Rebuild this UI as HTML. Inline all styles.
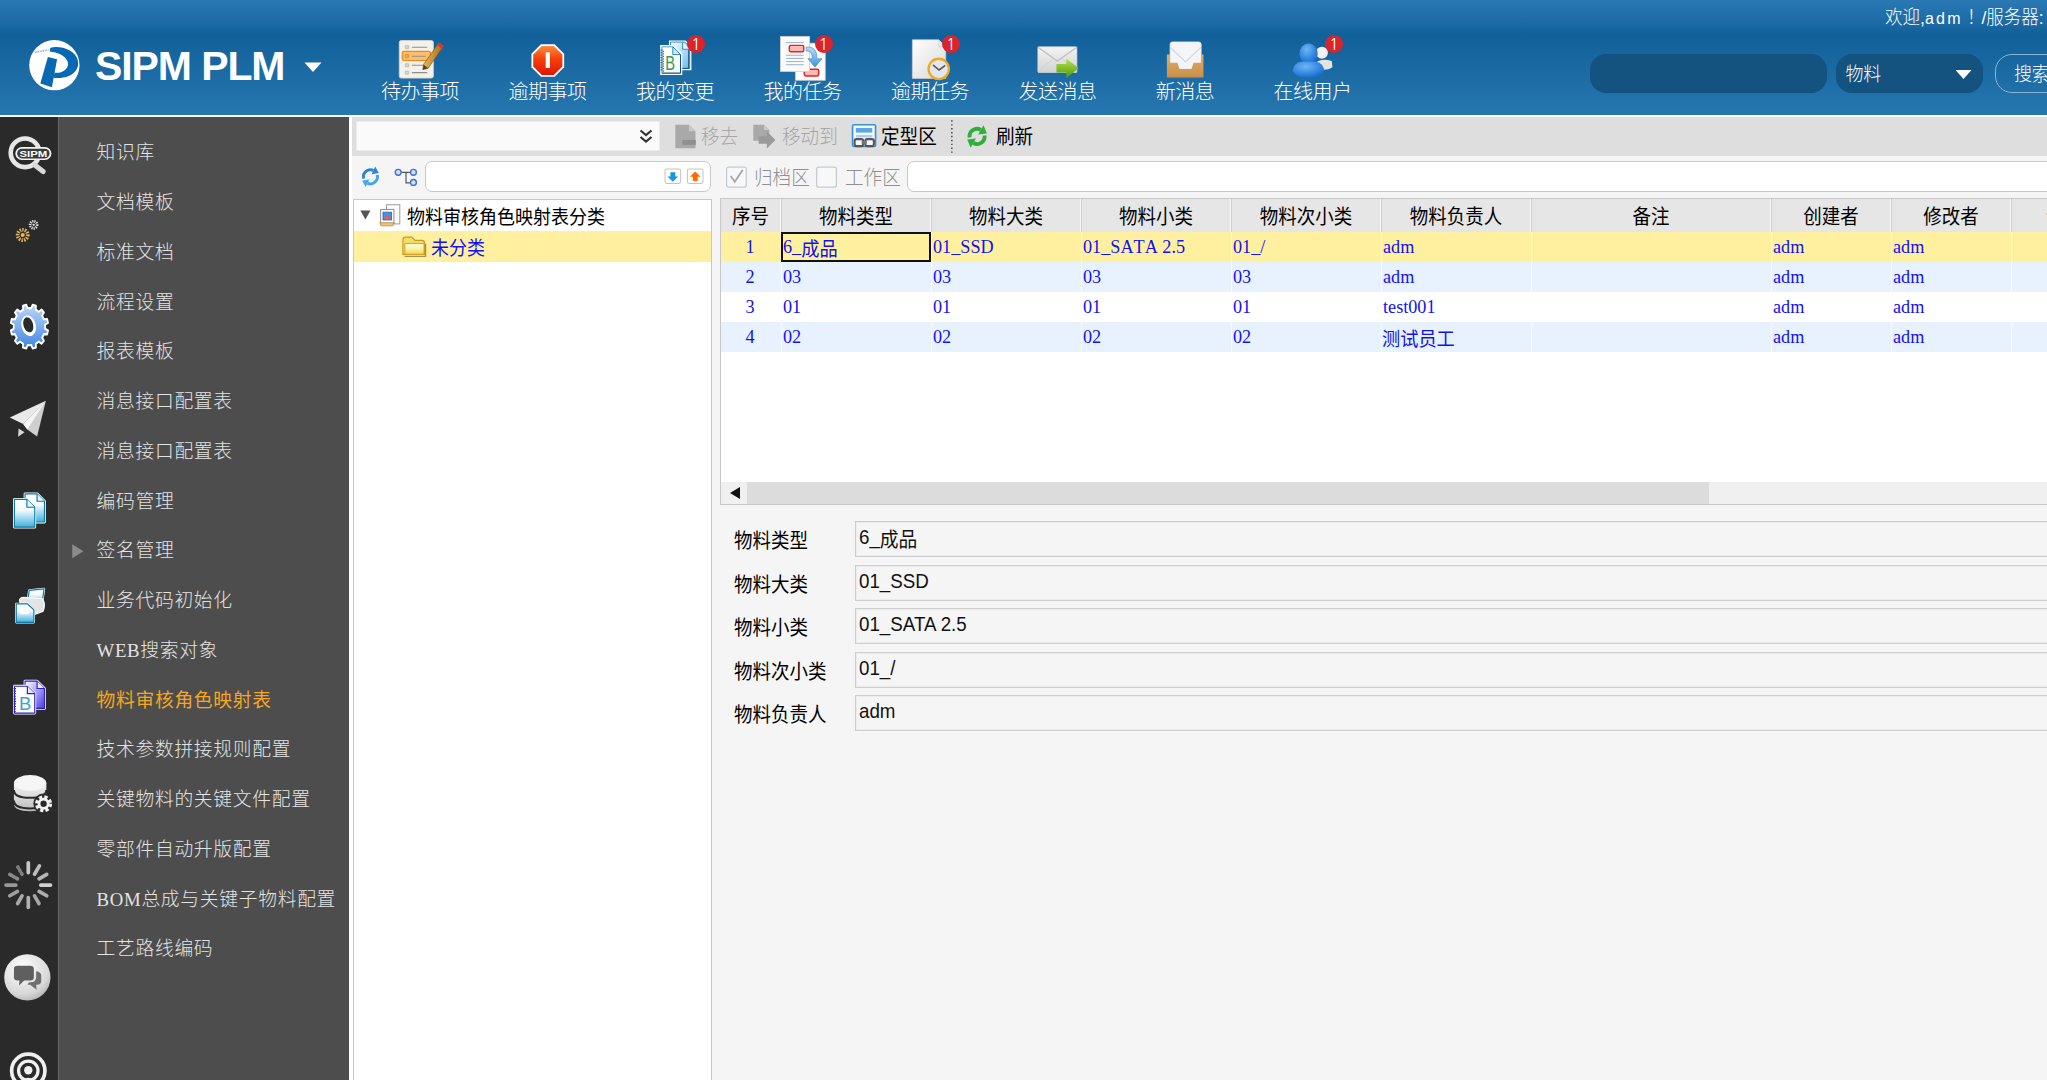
<!DOCTYPE html>
<html lang="zh-CN">
<head>
<meta charset="utf-8">
<title>SIPM PLM</title>
<style>
*{box-sizing:border-box;margin:0;padding:0}
html,body{width:2047px;height:1080px;overflow:hidden;background:#f5f5f5;font-family:"Liberation Sans","Noto Sans CJK SC",sans-serif;}
.abs{position:absolute}
#hdr{position:absolute;left:0;top:0;width:2047px;height:115px;background:linear-gradient(to bottom,#2a79b4 0px,#1d6aa5 22px,#11609a 35px,#13629c 42px,#2676b0 115px);}
#hline{position:absolute;left:0;top:115px;width:2047px;height:2.2px;background:#fff}
#logo-text{position:absolute;left:95px;top:44px;font:bold 41px/44px "Liberation Sans",sans-serif;color:#fff;letter-spacing:-1.1px;white-space:nowrap}
.nav{position:absolute;top:80px;width:128px;text-align:center;color:#fff;font:300 20px/24px "Liberation Sans","Noto Sans CJK SC",sans-serif;letter-spacing:-0.5px;white-space:nowrap}
.badge{position:absolute;width:18px;height:18px;border-radius:9px;background:#d9232d;color:#fff;font:15.5px/20px "NanumGothic","Liberation Sans",sans-serif;text-align:center}
#welcome{position:absolute;left:1885px;top:6px;transform:scaleY(1.08);transform-origin:50% 20%;color:#fff;font:300 17.5px/22px "Liberation Sans","Noto Sans CJK SC",sans-serif;white-space:nowrap}
.pill{position:absolute;top:53.5px;height:39.5px;border-radius:16px;background:#14527f}
/* sidebar */
#iconcol{position:absolute;left:0;top:117px;width:58px;height:963px;background:#2a2a2a}
#menucol{position:absolute;left:58px;top:117px;width:291px;height:963px;background:#4d4d4d;border-left:1px solid #686868}
.mi{position:absolute;left:96.5px;color:#e4e4e4;font:300 18.75px/24px "Liberation Serif","Noto Sans CJK SC",sans-serif;letter-spacing:.72px;white-space:nowrap}
.mi.on{color:#f5a623;font-weight:400}
/* main */
#tb1{position:absolute;left:352px;top:117px;width:1695px;height:39px;background:#dedede}
#tb2{position:absolute;left:352px;top:156px;width:1695px;height:43px;background:#f5f5f5}
.tbt{position:absolute;top:125px;font:400 18.6px/24px "Liberation Sans","Noto Sans CJK SC",sans-serif;white-space:nowrap;color:#000;transform:scaleY(1.1);transform-origin:50% 50%}
.tbt.dis{color:#a6a6a6;font-weight:300}
#tree{position:absolute;left:353px;top:199px;width:359px;height:890px;background:#fff;border:1px solid #c8c8c8}
#grid{position:absolute;left:720px;top:198px;width:1340px;height:307px;background:#fff;border:1px solid #c8c8c8}
.th{position:absolute;top:0;height:33px;background:#e6e6e6;border-right:1px solid #f8f8f8;border-left:1px solid #d0d0d0;text-align:center;font:400 18.5px/38px "Liberation Sans","Noto Sans CJK SC",sans-serif;color:#000;white-space:nowrap;overflow:hidden}
.row{position:absolute;left:0;width:1340px;height:30px}
.c{position:absolute;top:0;height:30px;padding-left:1px;font:18.2px/30px "Liberation Serif","Noto Sans CJK SC",serif;font-kerning:none;color:#1212ee;white-space:nowrap;border-left:1px solid rgba(255,255,255,.75)}
.lbl{position:absolute;left:734px;font:400 18.5px/24px "Liberation Sans","Noto Sans CJK SC",sans-serif;color:#000;white-space:nowrap;transform:scaleY(1.08);transform-origin:50% 50%}
.inp{position:absolute;left:855px;width:1300px;height:36px;border:1px solid #cdcdcd;box-shadow:inset 0 0 0 1px #ececec;background:#f5f5f5;font:18.75px/31px "Liberation Sans","Noto Sans CJK SC",sans-serif;padding-left:3px;color:#111;white-space:nowrap}
.sy{display:inline-block;transform:scaleY(1.08);transform-origin:50% 55%}
</style>
</head>
<body>
<div id="hdr"></div>
<div id="hline"></div>
<svg class="abs" style="left:20px;top:30px" width="80" height="70" viewBox="0 0 1234 1080">
<circle cx="530" cy="543" r="388" fill="#fff"/>
<path d="M430 418 L572 450 L492 882 L314 826 Z" fill="#0768b3"/>
<path d="M468 272 C620 235 850 300 893 470 C925 620 790 765 518 736 L532 660 C680 672 765 575 735 488 C700 390 580 342 458 330 Z" fill="#0768b3"/>
<path d="M228 345 L440 305" stroke="#0768b3" stroke-width="26" stroke-dasharray="14 12" opacity=".55"/>
</svg>
<div id="logo-text">SIPM PLM</div>
<svg class="abs" style="left:304px;top:62px" width="18" height="11" viewBox="0 0 18 11"><path d="M0.5 0.5 L17.5 0.5 L9 10 Z" fill="#fff"/></svg>

<svg class="abs" style="left:370px;top:25px" width="360" height="90" viewBox="0 0 2047 512">
<defs>
<linearGradient id="gStop" x1="0" y1="0" x2="0" y2="1"><stop offset="0" stop-color="#ff8a3c"/><stop offset=".45" stop-color="#f5400a"/><stop offset="1" stop-color="#e01500"/></linearGradient>
<linearGradient id="gPage" x1="0" y1="0" x2="1" y2="1"><stop offset="0" stop-color="#ffffff"/><stop offset="1" stop-color="#6fb6e6"/></linearGradient>
<linearGradient id="gPen" x1="0" y1="0" x2="1" y2="0"><stop offset="0" stop-color="#e8b85a"/><stop offset="1" stop-color="#a9681a"/></linearGradient>
</defs>
<!-- todo list -->
<rect x="166" y="88" width="194" height="214" rx="12" fill="#f4f1ea" stroke="#d9d3c6" stroke-width="5"/>
<rect x="183" y="150" width="160" height="52" rx="10" fill="#fbbf6c" stroke="#f0871a" stroke-width="7"/>
<g fill="#d8d5cf" stroke="#a9a59c" stroke-width="3"><rect x="200" y="117" width="20" height="18" rx="3"/><rect x="200" y="168" width="20" height="18" rx="3" fill="#f7a94a" stroke="#c97a1b"/><rect x="200" y="220" width="20" height="18" rx="3"/><rect x="200" y="262" width="20" height="18" rx="3"/></g>
<g stroke="#8e8e8e" stroke-width="6"><path d="M238 127H325M238 178H318M238 229H300M238 271H325"/></g>
<path d="M392 100 L418 120 L330 246 L300 254 L304 224 Z" fill="url(#gPen)" stroke="#8a5a18" stroke-width="4"/>
<path d="M392 100 L418 120 L408 134 L382 114 Z" fill="#e2332b"/>
<path d="M304 224 L330 246 L300 254 Z" fill="#5a4026"/>
<!-- stop sign -->
<g transform="translate(0 5)">
<path d="M972 104 L1050 104 L1104 158 L1104 236 L1050 290 L972 290 L918 236 L918 158 Z" fill="#fff"/>
<path d="M977 114 L1045 114 L1094 163 L1094 231 L1045 280 L977 280 L928 231 L928 163 Z" fill="url(#gStop)"/>
<rect x="999" y="150" width="24" height="90" rx="3" fill="#fff"/>
</g>
<!-- B docs -->
<path d="M1700 88 L1795 88 L1828 121 L1828 257 L1700 257 Z" fill="#fff"/>
<path d="M1709 97 L1790 97 L1818 125 L1818 247 L1709 247 Z" fill="url(#gPage)" stroke="#1583c4" stroke-width="5"/>
<path d="M1778 99 L1778 138 L1817 138" fill="#e8f5fc" stroke="#1583c4" stroke-width="5"/>
<path d="M1812 140 V247 H1712" fill="none" stroke="#0b4f94" stroke-width="5"/>
<path d="M1650 114 L1728 114 L1776 162 L1776 285 L1650 285 Z" fill="#fff"/>
<path d="M1660 124 L1722 124 L1766 168 L1766 274 L1660 274 Z" fill="#fff" stroke="#2a97d0" stroke-width="5"/>
<path d="M1722 124 L1722 168 L1766 168 Z" fill="#cfe9f8" stroke="#1583c4" stroke-width="5"/>
<path d="M1660 274 H1766 V170" fill="none" stroke="#0b3f80" stroke-width="5"/>
<path d="M1658 140 V262" stroke="#2a6fae" stroke-width="12" stroke-dasharray="7 7"/>
<path d="M1668 147 V268" stroke="#2a6fae" stroke-width="8" stroke-dasharray="7 7"/>
<text transform="translate(1679 257) scale(.72 1)" font-family="Liberation Sans, sans-serif" font-size="116" fill="#2e9f4f">B</text>
</svg>
<svg class="abs" style="left:740px;top:25px" width="360" height="90" viewBox="0 0 2047 512">
<defs>
<linearGradient id="gDoc" x1="0" y1="0" x2="1" y2="1"><stop offset="0" stop-color="#ffffff"/><stop offset="1" stop-color="#d8d8d8"/></linearGradient>
<linearGradient id="gArr" x1="0" y1="0" x2="0" y2="1"><stop offset="0" stop-color="#b9dcf7"/><stop offset="1" stop-color="#3e93d8"/></linearGradient>
<linearGradient id="gGreen" x1="0" y1="0" x2="0" y2="1"><stop offset="0" stop-color="#b6e34a"/><stop offset="1" stop-color="#4c9a10"/></linearGradient>
<linearGradient id="gEnv" x1="0" y1="0" x2="0" y2="1"><stop offset="0" stop-color="#f4f4f4"/><stop offset="1" stop-color="#d2d2d2"/></linearGradient>
</defs>
<!-- my tasks -->
<rect x="316" y="104" width="168" height="210" fill="#fff" stroke="#d6d6d6" stroke-width="5"/>
<rect x="365" y="252" width="82" height="38" rx="8" fill="#f9b9b5" stroke="#e8231f" stroke-width="8"/>
<rect x="230" y="66" width="165" height="198" fill="#fbfbfb" stroke="#d2d2d2" stroke-width="5"/>
<g stroke="#86a9cf" stroke-width="5"><path d="M262 100H362M262 172H362M262 190H362M262 208H362M262 226H362"/></g>
<rect x="280" y="116" width="82" height="36" rx="8" fill="#f9b9b5" stroke="#e8231f" stroke-width="8"/>
<path d="M376 126 C420 120 440 150 436 192 L466 192 L426 240 L386 192 L410 192 C412 160 400 148 376 148 Z" fill="url(#gArr)" stroke="#4d96d4" stroke-width="4"/>
<!-- overdue tasks -->
<path d="M980 84 L1130 84 L1170 124 L1170 304 L980 304 Z" fill="url(#gDoc)" stroke="#cfcfcf" stroke-width="4"/>
<path d="M1130 84 L1130 124 L1170 124 Z" fill="#e9e9e9" stroke="#c8c8c8" stroke-width="3"/>
<circle cx="1130" cy="250" r="58" fill="#e3e6f1" stroke="#f0a81c" stroke-width="13"/>
<path d="M1100 230 L1132 256 L1164 232" fill="none" stroke="#555" stroke-width="9" stroke-linecap="round"/>
<!-- send message -->
<rect x="1694" y="124" width="222" height="146" rx="5" fill="url(#gEnv)" stroke="#d9d9d9" stroke-width="4"/>
<path d="M1696 128 L1805 205 L1914 128" fill="none" stroke="#bdbdbd" stroke-width="6"/>
<path d="M1696 268 L1775 195 M1914 268 L1835 195" stroke="#cfcfcf" stroke-width="5"/>
<path d="M1800 222 L1856 222 L1856 190 L1926 246 L1856 302 L1856 270 L1800 270 Z" fill="url(#gGreen)"/>
</svg>
<svg class="abs" style="left:1100px;top:25px" width="360" height="90" viewBox="0 0 2047 512">
<defs>
<linearGradient id="gTray" x1="0" y1="0" x2="0" y2="1"><stop offset="0" stop-color="#e0ae68"/><stop offset="1" stop-color="#c98f48"/></linearGradient>
<radialGradient id="gBlue" cx=".4" cy=".3" r=".8"><stop offset="0" stop-color="#6db6f5"/><stop offset="1" stop-color="#0a63cf"/></radialGradient>
</defs>
<!-- inbox -->
<path d="M398 110 Q398 96 412 96 L560 96 Q575 96 575 110 L575 250 L398 250 Z" fill="#f3f5f8" stroke="#e2e5ea" stroke-width="4"/>
<path d="M400 128 L486 210 L573 128" fill="none" stroke="#d3d7dd" stroke-width="6"/>
<path d="M380 168 L398 168 L398 215 L440 215 L452 250 L520 250 L532 215 L575 215 L575 168 L588 168 L588 298 L380 298 Z" fill="url(#gTray)"/>
<!-- users -->
<circle cx="1262" cy="158" r="34" fill="#f2f2f2"/>
<path d="M1225 215 Q1262 185 1318 205 L1322 240 Q1290 262 1240 250 Z" fill="#e4e4e4"/>
<ellipse cx="1186" cy="163" rx="52" ry="58" fill="url(#gBlue)"/>
<path d="M1096 262 Q1100 215 1150 208 L1222 208 Q1272 215 1276 262 Q1260 300 1186 300 Q1112 300 1096 262 Z" fill="url(#gBlue)"/>
</svg>
<div class="nav" style="left:356px">待办事项</div>
<div class="nav" style="left:483.5px">逾期事项</div>
<div class="nav" style="left:611px">我的变更</div>
<div class="nav" style="left:738.5px">我的任务</div>
<div class="nav" style="left:866px">逾期任务</div>
<div class="nav" style="left:993.5px">发送消息</div>
<div class="nav" style="left:1121px">新消息</div>
<div class="nav" style="left:1248.5px">在线用户</div>
<div class="badge" style="left:687px;top:35px">1</div>
<div class="badge" style="left:814.5px;top:35px">1</div>
<div class="badge" style="left:942px;top:35px">1</div>
<div class="badge" style="left:1325px;top:35px">1</div>

<div id="welcome">欢迎,<span style="letter-spacing:2.3px;font-size:16px">adm</span><span style="margin-left:4px;margin-right:-3px">！</span>/服务器:</div>
<div class="pill" style="left:1590px;width:237px"></div>
<div class="pill" style="left:1836px;width:147px"></div>
<div class="abs" style="left:1845.5px;top:62px;color:#fff;font:300 18px/24px 'Liberation Sans','Noto Sans CJK SC',sans-serif;letter-spacing:-.3px;transform:scaleY(1.1)">物料</div>
<svg class="abs" style="left:1955px;top:70px" width="17" height="9" viewBox="0 0 17 9"><path d="M0.5 0 L16.5 0 L8.5 9 Z" fill="#fff"/></svg>
<div class="abs" style="left:1995px;top:54px;width:120px;height:39px;border:1.5px solid #8db4d6;border-radius:17px"></div>
<div class="abs" style="left:2014px;top:62px;color:#fff;font:300 18px/24px 'Liberation Sans','Noto Sans CJK SC',sans-serif;letter-spacing:-.3px;white-space:nowrap;transform:scaleY(1.1)">搜索</div>

<div id="iconcol"></div>
<div id="menucol"></div>
<svg class="abs" style="left:0;top:110px" width="120" height="250" viewBox="0 0 518 1080">
<defs>
<linearGradient id="gGear" x1="0" y1="0" x2="0" y2="1"><stop offset="0" stop-color="#b9d4f6"/><stop offset=".5" stop-color="#7fb0ee"/><stop offset="1" stop-color="#3f83e0"/></linearGradient>
</defs>
<!-- search sipm -->
<circle cx="108" cy="185" r="62" fill="none" stroke="#e6e6e6" stroke-width="20"/>
<path d="M150 238 L186 266" stroke="#d9d9d9" stroke-width="22" stroke-linecap="round"/>
<rect x="66" y="160" width="156" height="56" rx="28" fill="#f2f2f2"/>
<rect x="74" y="167" width="140" height="42" rx="21" fill="#3a3a3a"/>
<text x="144" y="203" text-anchor="middle" font-family="Liberation Sans, sans-serif" font-weight="bold" font-size="40" fill="#fff" textLength="120" lengthAdjust="spacingAndGlyphs">SIPM</text>
<!-- small gears -->
<circle cx="98" cy="540" r="22" fill="none" stroke="#e5b85a" stroke-width="16" stroke-dasharray="6 5"/>
<circle cx="98" cy="540" r="9" fill="#e5b85a"/>
<circle cx="145" cy="496" r="15" fill="none" stroke="#e8e8e8" stroke-width="12" stroke-dasharray="5 4"/>
<circle cx="145" cy="496" r="5" fill="#e8e8e8"/>
<!-- big gear -->
<g transform="translate(127 936) scale(.85 1)">
<path d="M80.0 0.0 L79.5 8.9 L94.6 16.3 L90.1 33.2 L73.3 32.1 L69.3 40.0 L64.4 47.4 L73.8 61.4 L61.4 73.8 L47.4 64.4 L40.0 69.3 L32.1 73.3 L33.2 90.1 L16.3 94.6 L8.9 79.5 L0.0 80.0 L-8.9 79.5 L-16.3 94.6 L-33.2 90.1 L-32.1 73.3 L-40.0 69.3 L-47.4 64.4 L-61.4 73.8 L-73.8 61.4 L-64.4 47.4 L-69.3 40.0 L-73.3 32.1 L-90.1 33.2 L-94.6 16.3 L-79.5 8.9 L-80.0 0.0 L-79.5 -8.9 L-94.6 -16.3 L-90.1 -33.2 L-73.3 -32.1 L-69.3 -40.0 L-64.4 -47.4 L-73.8 -61.4 L-61.4 -73.8 L-47.4 -64.4 L-40.0 -69.3 L-32.1 -73.3 L-33.2 -90.1 L-16.3 -94.6 L-8.9 -79.5 L-0.0 -80.0 L8.9 -79.5 L16.3 -94.6 L33.2 -90.1 L32.1 -73.3 L40.0 -69.3 L47.4 -64.4 L61.4 -73.8 L73.8 -61.4 L64.4 -47.4 L69.3 -40.0 L73.3 -32.1 L90.1 -33.2 L94.6 -16.3 L79.5 -8.9 Z" fill="url(#gGear)" stroke="#fff" stroke-width="9" stroke-linejoin="round"/>
<ellipse rx="36" ry="46" transform="translate(-4 -4) rotate(-25)" fill="#fff"/>
<ellipse rx="24" ry="34" transform="translate(-6 -8) rotate(-25)" fill="#2a2a2a"/>
</g>
</svg>
<svg class="abs" style="left:0;top:360px" width="120" height="250" viewBox="0 0 518 1080">
<defs>
<linearGradient id="gPg2" x1="0" y1="0" x2="0" y2="1"><stop offset="0" stop-color="#ffffff"/><stop offset=".4" stop-color="#f2fafe"/><stop offset="1" stop-color="#3fb0dc"/></linearGradient>
</defs>
<!-- paper plane -->
<path d="M198 176 L42 248 L100 276 Z" fill="#e9e9e9"/>
<path d="M198 176 L100 276 L118 300 L160 330 Z" fill="#cfcfcf"/>
<path d="M198 176 L118 300 L100 276 Z" fill="#f4f4f4"/>
<path d="M80 296 L106 312 L78 332 Z" fill="#d6d6d6"/>
<!-- docs -->
<path d="M108 578 L160 578 L192 610 L192 700 L108 700 Z" fill="url(#gPg2)" stroke="#fff" stroke-width="12" stroke-linejoin="round"/>
<path d="M108 578 L160 578 L192 610 L192 700 L108 700 Z" fill="url(#gPg2)" stroke="#0b7aa8" stroke-width="5"/>
<path d="M160 578 L160 610 L192 610" fill="#e4f3fc" stroke="#0b7aa8" stroke-width="5"/>
<path d="M62 602 L116 602 L150 636 L150 722 L62 722 Z" fill="url(#gPg2)" stroke="#fff" stroke-width="12" stroke-linejoin="round"/>
<path d="M62 602 L116 602 L150 636 L150 722 L62 722 Z" fill="url(#gPg2)" stroke="#0b7aa8" stroke-width="5"/>
<path d="M116 602 L116 636 L150 636" fill="#e4f3fc" stroke="#0b7aa8" stroke-width="5"/>
<!-- expand triangle -->
<path d="M312 796 L360 826 L312 856 Z" fill="#8c8c8c"/>
</svg>
<svg class="abs" style="left:0;top:570px" width="120" height="250" viewBox="0 0 518 1080">
<defs>
<linearGradient id="gPg3" x1="0" y1="0" x2="0" y2="1"><stop offset="0" stop-color="#ffffff"/><stop offset=".4" stop-color="#f2fafe"/><stop offset="1" stop-color="#3fb0dc"/></linearGradient>
<linearGradient id="gPg4" x1="0" y1="0" x2="1" y2="1"><stop offset="0" stop-color="#ffffff"/><stop offset="1" stop-color="#4a3ee0"/></linearGradient>
<linearGradient id="gDb" x1="0" y1="0" x2="0" y2="1"><stop offset="0" stop-color="#f4f4f4"/><stop offset="1" stop-color="#bdbdbd"/></linearGradient>
</defs>
<!-- copy docs -->
<path d="M126 88 L190 82 L182 140 L118 146 Z" fill="url(#gPg3)" stroke="#fff" stroke-width="10" stroke-linejoin="round"/>
<path d="M126 88 L190 82 L182 140 L118 146 Z" fill="url(#gPg3)" stroke="#0b7aa8" stroke-width="5"/>
<path d="M84 132 Q84 118 104 118 L184 124 Q198 150 186 178 L150 192 L100 186 Z" fill="#e4e4e4" stroke="#fff" stroke-width="5"/>
<path d="M70 146 L118 146 L146 172 L146 226 L70 226 Z" fill="url(#gPg3)" stroke="#fff" stroke-width="10" stroke-linejoin="round"/>
<path d="M70 146 L118 146 L146 172 L146 226 L70 226 Z" fill="url(#gPg3)" stroke="#0b7aa8" stroke-width="5"/>
<path d="M92 160 L92 186 L124 186" fill="none" stroke="#fff" stroke-width="10"/>
<!-- B docs -->
<path d="M108 480 L160 480 L192 512 L192 598 L108 598 Z" fill="url(#gPg4)" stroke="#fff" stroke-width="12" stroke-linejoin="round"/>
<path d="M108 480 L160 480 L192 512 L192 598 L108 598 Z" fill="url(#gPg4)" stroke="#2b1fc8" stroke-width="5"/>
<path d="M160 480 L160 512 L192 512" fill="#e9e6ff" stroke="#2b1fc8" stroke-width="5"/>
<path d="M62 502 L118 502 L150 534 L150 618 L62 618 Z" fill="#fff" stroke="#fff" stroke-width="12" stroke-linejoin="round"/>
<path d="M62 502 L118 502 L150 534 L150 618 L62 618 Z" fill="#fff" stroke="#2b1fc8" stroke-width="5"/>
<path d="M118 502 L118 534 L150 534" fill="#e9e6ff" stroke="#2b1fc8" stroke-width="5"/>
<path d="M64 510 V612" stroke="#2b1fc8" stroke-width="10" stroke-dasharray="5 6"/>
<text x="82" y="606" font-family="Liberation Sans, sans-serif" font-size="80" fill="#3aa6cc">B</text>
<!-- database gear -->
<g fill="url(#gDb)">
<path d="M60 920 L60 1010 Q60 1042 130 1042 Q200 1042 200 1010 L200 920 Z"/>
<ellipse cx="130" cy="920" rx="70" ry="34" fill="#f6f6f6"/>
</g>
<path d="M60 950 Q60 984 130 984 Q200 984 200 950" fill="none" stroke="#2a2a2a" stroke-width="9"/>
<path d="M60 996 Q60 1030 130 1030 Q200 1030 200 996" fill="none" stroke="#2a2a2a" stroke-width="9"/>
<circle cx="188" cy="1010" r="44" fill="#2a2a2a"/>
<circle cx="188" cy="1010" r="26" fill="none" stroke="#f2f2f2" stroke-width="22" stroke-dasharray="12 8.4"/>
<circle cx="188" cy="1010" r="20" fill="none" stroke="#f2f2f2" stroke-width="12"/>
</svg>
<svg class="abs" style="left:0;top:830px" width="120" height="250" viewBox="0 0 518 1080">
<defs>
<radialGradient id="gBall" cx=".4" cy=".3" r=".8"><stop offset="0" stop-color="#ffffff"/><stop offset=".7" stop-color="#d8d8d8"/><stop offset="1" stop-color="#a8a8a8"/></radialGradient>
</defs>
<!-- spinner -->
<g transform="translate(122 238)" stroke-linecap="round" stroke-width="16">
<path d="M0 -54 V-96" stroke="#c8c8c8"/>
<path d="M0 -54 V-96" stroke="#bdbdbd" transform="rotate(30)"/>
<path d="M0 -54 V-92" stroke="#b5b5b5" transform="rotate(60)"/>
<path d="M0 -54 V-96" stroke="#d0d0d0" transform="rotate(90)"/>
<path d="M0 -54 V-92" stroke="#adadad" transform="rotate(120)"/>
<path d="M0 -54 V-92" stroke="#a5a5a5" transform="rotate(150)"/>
<path d="M0 -54 V-96" stroke="#b0b0b0" transform="rotate(180)"/>
<path d="M0 -54 V-92" stroke="#a8a8a8" transform="rotate(210)"/>
<path d="M0 -54 V-92" stroke="#a0a0a0" transform="rotate(240)"/>
<path d="M0 -54 V-96" stroke="#989898" transform="rotate(270)"/>
<path d="M0 -54 V-92" stroke="#8a8a8a" stroke-dasharray="6 10" transform="rotate(300)"/>
<path d="M0 -54 V-92" stroke="#7d7d7d" stroke-dasharray="4 12" transform="rotate(330)"/>
</g>
<!-- chat -->
<circle cx="118" cy="637" r="100" fill="url(#gBall)"/>
<path d="M60 600 Q60 586 76 586 L130 586 Q146 586 146 600 L146 636 Q146 650 130 650 L104 650 L82 672 L84 650 L76 650 Q60 650 60 636 Z" fill="#5f5f5f"/>
<path d="M156 610 Q178 612 178 630 L178 652 Q178 668 160 668 L156 668 L158 690 L130 668 L118 668 L126 658 L132 658 Q156 658 156 636 Z" fill="#707070"/>
<!-- target person -->
<circle cx="122" cy="1040" r="72" fill="none" stroke="#f0f0f0" stroke-width="16"/>
<circle cx="122" cy="1040" r="42" fill="none" stroke="#f0f0f0" stroke-width="14"/>
<circle cx="122" cy="1038" r="18" fill="#f0f0f0"/>
<path d="M88 1090 Q122 1050 156 1090 Z" fill="#f0f0f0"/>
</svg>
<div class="mi" style="top:141.3px">知识库</div>
<div class="mi" style="top:191.1px">文档模板</div>
<div class="mi" style="top:240.8px">标准文档</div>
<div class="mi" style="top:290.6px">流程设置</div>
<div class="mi" style="top:340.3px">报表模板</div>
<div class="mi" style="top:390.1px">消息接口配置表</div>
<div class="mi" style="top:439.8px">消息接口配置表</div>
<div class="mi" style="top:489.6px">编码管理</div>
<div class="mi" style="top:539.3px">签名管理</div>
<div class="mi" style="top:589.0px">业务代码初始化</div>
<div class="mi" style="top:638.8px">WEB搜索对象</div>
<div class="mi on" style="top:688.5px">物料审核角色映射表</div>
<div class="mi" style="top:738.3px">技术参数拼接规则配置</div>
<div class="mi" style="top:788.0px">关键物料的关键文件配置</div>
<div class="mi" style="top:837.8px">零部件自动升版配置</div>
<div class="mi" style="top:887.5px">BOM总成与关键子物料配置</div>
<div class="mi" style="top:937.3px">工艺路线编码</div>

<div class="abs" style="left:349px;top:117px;width:3.5px;height:963px;background:#fff"></div>
<div id="tb1"></div>
<div id="tb2"></div>
<!-- combobox -->
<div class="abs" style="left:356px;top:121px;width:304px;height:30px;background:#fafafa;border:1px solid #ececec"></div>
<svg class="abs" style="left:638px;top:128px" width="16" height="17" viewBox="0 0 16 17"><path d="M2.5 2.5 L8 7 L13.500 2.5 M2.500 9 L8 13.500 L13.500 9" fill="none" stroke="#333" stroke-width="2.200"/></svg>
<div class="abs" style="left:425px;top:161px;width:286px;height:31px;background:#fff;border:1px solid #c9c9c9;border-radius:7px"></div>
<div class="abs" style="left:907px;top:161px;width:1200px;height:31px;background:#fff;border:1px solid #c9c9c9;border-radius:7px"></div>
<!-- toolbar buttons -->
<svg class="abs" style="left:640px;top:110px" width="420" height="160" viewBox="0 0 2047 780">
<!-- remove icon -->
<path d="M172 72 L238 72 L270 104 L270 186 L172 186 Z" fill="#a9a9a9"/>
<path d="M238 72 L238 104 L270 104 Z" fill="#c9c9c9"/>
<rect x="206" y="146" width="66" height="24" fill="#8f8f8f"/>
<!-- move icon -->
<path d="M552 72 L604 72 L630 98 L630 150 L552 150 Z" fill="#a9a9a9"/>
<path d="M604 72 L604 98 L630 98 Z" fill="#c9c9c9"/>
<path d="M578 128 L618 128 L618 104 L660 146 L618 188 L618 164 L578 164 Z" fill="#9a9a9a"/>
<!-- dingxing icon -->
<rect x="1036" y="72" width="112" height="106" rx="6" fill="#f4f9ff" stroke="#3f8fd6" stroke-width="8"/>
<rect x="1052" y="88" width="80" height="22" fill="#5aa5e8"/>
<rect x="1052" y="122" width="80" height="12" fill="#a8d0f4"/>
<rect x="1046" y="142" width="42" height="34" rx="10" fill="none" stroke="#555" stroke-width="10"/>
<rect x="1098" y="142" width="42" height="34" rx="10" fill="none" stroke="#555" stroke-width="10"/>
<rect x="1080" y="152" width="26" height="12" fill="#777"/>
<!-- separator -->
<path d="M1520 50 V212" stroke="#444" stroke-width="7" stroke-dasharray="7 12"/>
<!-- refresh -->
<path d="M1606.4 134.1 A37 37 0 0 1 1661.5 97.0" fill="none" stroke="#2fae3c" stroke-width="19"/><path d="M1674.5 74.4 L1648.5 119.5 L1690.9 114.0 Z" fill="#2fae3c"/>
<path d="M1679.6 123.9 A37 37 0 0 1 1624.5 161.0" fill="none" stroke="#2fae3c" stroke-width="19"/><path d="M1611.5 183.6 L1637.5 138.5 L1595.1 144.0 Z" fill="#2fae3c"/>
<!-- down/up buttons -->
<rect x="122" y="288" width="76" height="70" rx="8" fill="#fff" stroke="#c4c4c4" stroke-width="5"/>
<path d="M148 304 L172 304 L172 324 L186 324 L160 350 L134 324 L148 324 Z" fill="#1b96d8"/>
<rect x="231" y="288" width="76" height="70" rx="8" fill="#fff" stroke="#c4c4c4" stroke-width="5"/>
<path d="M257 346 L281 346 L281 326 L295 326 L269 300 L243 326 L257 326 Z" fill="#ff6a00"/>
<!-- checkboxes -->
<rect x="422" y="278" width="96" height="98" rx="10" fill="#f8f8f8" stroke="#c3c9d4" stroke-width="6"/>
<path d="M442 322 L462 350 L500 292" fill="none" stroke="#a9a9a9" stroke-width="9"/>
<rect x="861" y="278" width="96" height="98" rx="10" fill="#f8f8f8" stroke="#c3c9d4" stroke-width="6"/>
</svg>
<div class="tbt dis" style="left:701px">移去</div>
<div class="tbt dis" style="left:782px">移动到</div>
<div class="tbt" style="left:881px">定型区</div>
<div class="tbt" style="left:996px">刷新</div>
<div class="tbt" style="left:754px;top:166px;color:#8f8f8f;font-weight:300">归档区</div>
<div class="tbt" style="left:845px;top:166px;color:#8f8f8f;font-weight:300">工作区</div>
<!-- left search row -->
<svg class="abs" style="left:340px;top:100px" width="100" height="170" viewBox="0 0 512 870">
<path d="M121.2 402.3 A36 36 0 0 1 171.2 360.4" fill="none" stroke="#2b84dc" stroke-width="15"/><path d="M180.5 340.4 L161.9 380.3 L198.4 373.1 Z" fill="#2b84dc"/>
<path d="M190.8 383.7 A36 36 0 0 1 140.8 425.6" fill="none" stroke="#45a6ee" stroke-width="15"/><path d="M131.5 445.6 L150.1 405.7 L113.6 412.9 Z" fill="#45a6ee"/>
<circle cx="298" cy="370" r="15" fill="#cfe0f8" stroke="#3f6fd0" stroke-width="7"/>
<circle cx="376" cy="370" r="15" fill="#cfe0f8" stroke="#3f6fd0" stroke-width="7"/>
<circle cx="376" cy="422" r="15" fill="#cfe0f8" stroke="#3f6fd0" stroke-width="7"/>
<path d="M316 370 H358 M338 372 V424 H358" fill="none" stroke="#555" stroke-width="6"/>
</svg>
<!-- tree -->
<div id="tree">
<div class="abs" style="left:0;top:31px;width:357px;height:31px;background:#fff0a0"></div>
</div>
<svg class="abs" style="left:340px;top:100px" width="400" height="170" viewBox="0 0 2047 870">
<path d="M104 566 L156 566 L130 612 Z" fill="#555"/>
<rect x="238" y="536" width="68" height="98" fill="#fff" stroke="#9a9a9a" stroke-width="5"/>
<rect x="208" y="560" width="68" height="72" fill="#fff" stroke="#8a8a8a" stroke-width="5"/>
<rect x="220" y="574" width="44" height="40" fill="#4a90e2" stroke="#2d5fa8" stroke-width="4"/>
<rect x="232" y="590" width="22" height="22" fill="#e85a4a"/>
<path d="M204 628 L276 628 L270 644 L210 644 Z" fill="#f1c27a" stroke="#b98331" stroke-width="4"/>
<!-- folder -->
<defs><linearGradient id="gFold" x1="0" y1="0" x2="0" y2="1"><stop offset="0" stop-color="#fffde0"/><stop offset=".5" stop-color="#fdf3a0"/><stop offset="1" stop-color="#f3cf55"/></linearGradient></defs>
<path d="M330 800 L438 800 L438 736" fill="none" stroke="#7d6a2c" stroke-width="7" opacity=".7"/>
<path d="M322 716 Q322 702 336 702 L368 702 L384 718 L420 718 Q432 718 432 730 L432 790 L322 790 Z" fill="#f6dc6a" stroke="#c9981c" stroke-width="6"/>
<path d="M332 734 L430 734 L430 790 L332 790 Z" fill="url(#gFold)" stroke="#d0a224" stroke-width="5"/>
</svg>
<div class="tbt" style="left:407px;top:204.6px;font-size:18px;font-weight:400">物料审核角色映射表分类</div>
<div class="tbt" style="left:431px;top:235.6px;font-size:18px;font-weight:400;color:#1212ee">未分类</div>
<!-- grid -->
<div id="grid">
<div class="th" style="left:0;width:60px;border-left:0"><span class="sy">序号</span></div>
<div class="th" style="left:60px;width:150px"><span class="sy">物料类型</span></div>
<div class="th" style="left:210px;width:150px"><span class="sy">物料大类</span></div>
<div class="th" style="left:360px;width:150px"><span class="sy">物料小类</span></div>
<div class="th" style="left:510px;width:150px"><span class="sy">物料次小类</span></div>
<div class="th" style="left:660px;width:150px"><span class="sy">物料负责人</span></div>
<div class="th" style="left:810px;width:240px"><span class="sy">备注</span></div>
<div class="th" style="left:1050px;width:120px"><span class="sy">创建者</span></div>
<div class="th" style="left:1170px;width:120px"><span class="sy">修改者</span></div>
<div class="th" style="left:1290px;width:120px;text-align:left;padding-left:34px"><span class="sy">创建时间</span></div>
<div class="row" style="top:33px;background:#fff0a0"><div class="c" style="left:0;width:58px;text-align:center;padding:0;border:0"><span class="sy">1</span></div><div class="c" style="left:60px;width:150px;border:2px solid #111;line-height:26px;padding-left:0;font-family:'Liberation Serif','Noto Sans CJK SC',sans-serif;font-weight:400"><span class="sy">6_<span style="position:relative;top:2px">成品</span></span></div><div class="c" style="left:210px;width:150px"><span class="sy">01_SSD</span></div><div class="c" style="left:360px;width:150px"><span class="sy">01_SATA 2.5</span></div><div class="c" style="left:510px;width:150px"><span class="sy">01_/</span></div><div class="c" style="left:660px;width:150px"><span class="sy">adm</span></div><div class="c" style="left:810px;width:240px"></div><div class="c" style="left:1050px;width:120px"><span class="sy">adm</span></div><div class="c" style="left:1170px;width:120px"><span class="sy">adm</span></div><div class="c" style="left:1290px;width:120px"></div></div>
<div class="row" style="top:63px;background:#e8f2fe"><div class="c" style="left:0;width:58px;text-align:center;padding:0;border:0"><span class="sy">2</span></div><div class="c" style="left:60px;width:150px"><span class="sy">03</span></div><div class="c" style="left:210px;width:150px"><span class="sy">03</span></div><div class="c" style="left:360px;width:150px"><span class="sy">03</span></div><div class="c" style="left:510px;width:150px"><span class="sy">03</span></div><div class="c" style="left:660px;width:150px"><span class="sy">adm</span></div><div class="c" style="left:810px;width:240px"></div><div class="c" style="left:1050px;width:120px"><span class="sy">adm</span></div><div class="c" style="left:1170px;width:120px"><span class="sy">adm</span></div><div class="c" style="left:1290px;width:120px"></div></div>
<div class="row" style="top:93px;background:#fff"><div class="c" style="left:0;width:58px;text-align:center;padding:0;border:0"><span class="sy">3</span></div><div class="c" style="left:60px;width:150px"><span class="sy">01</span></div><div class="c" style="left:210px;width:150px"><span class="sy">01</span></div><div class="c" style="left:360px;width:150px"><span class="sy">01</span></div><div class="c" style="left:510px;width:150px"><span class="sy">01</span></div><div class="c" style="left:660px;width:150px"><span class="sy">test001</span></div><div class="c" style="left:810px;width:240px"></div><div class="c" style="left:1050px;width:120px"><span class="sy">adm</span></div><div class="c" style="left:1170px;width:120px"><span class="sy">adm</span></div><div class="c" style="left:1290px;width:120px"></div></div>
<div class="row" style="top:123px;background:#e8f2fe"><div class="c" style="left:0;width:58px;text-align:center;padding:0;border:0"><span class="sy">4</span></div><div class="c" style="left:60px;width:150px"><span class="sy">02</span></div><div class="c" style="left:210px;width:150px"><span class="sy">02</span></div><div class="c" style="left:360px;width:150px"><span class="sy">02</span></div><div class="c" style="left:510px;width:150px"><span class="sy">02</span></div><div class="c" style="left:660px;width:150px;font-family:'Liberation Sans','Noto Sans CJK SC',sans-serif;font-weight:400"><span class="sy" style="position:relative;top:2.5px;left:-1px">测试员工</span></div><div class="c" style="left:810px;width:240px"></div><div class="c" style="left:1050px;width:120px"><span class="sy">adm</span></div><div class="c" style="left:1170px;width:120px"><span class="sy">adm</span></div><div class="c" style="left:1290px;width:120px"></div></div>
<!-- scrollbar -->
<div class="abs" style="left:0;top:283px;width:1340px;height:22px;background:#f0f0f0"></div>
<div class="abs" style="left:26px;top:283px;width:962px;height:22px;background:#dcdcdc"></div>
<svg class="abs" style="left:8px;top:287px" width="12" height="14" viewBox="0 0 12 14"><path d="M11 1 L11 13 L1 7 Z" fill="#111"/></svg>
</div>
<!-- form -->
<div class="lbl" style="top:530px">物料类型</div>
<div class="lbl" style="top:573.5px">物料大类</div>
<div class="lbl" style="top:617px">物料小类</div>
<div class="lbl" style="top:660.5px">物料次小类</div>
<div class="lbl" style="top:704px">物料负责人</div>
<div class="inp" style="top:521px"><span class="sy">6_<span style="position:relative;top:1.5px">成品</span></span></div>
<div class="inp" style="top:564.5px"><span class="sy">01_SSD</span></div>
<div class="inp" style="top:608px"><span class="sy">01_SATA 2.5</span></div>
<div class="inp" style="top:651.5px"><span class="sy">01_/</span></div>
<div class="inp" style="top:695px"><span class="sy">adm</span></div>

</body>
</html>
